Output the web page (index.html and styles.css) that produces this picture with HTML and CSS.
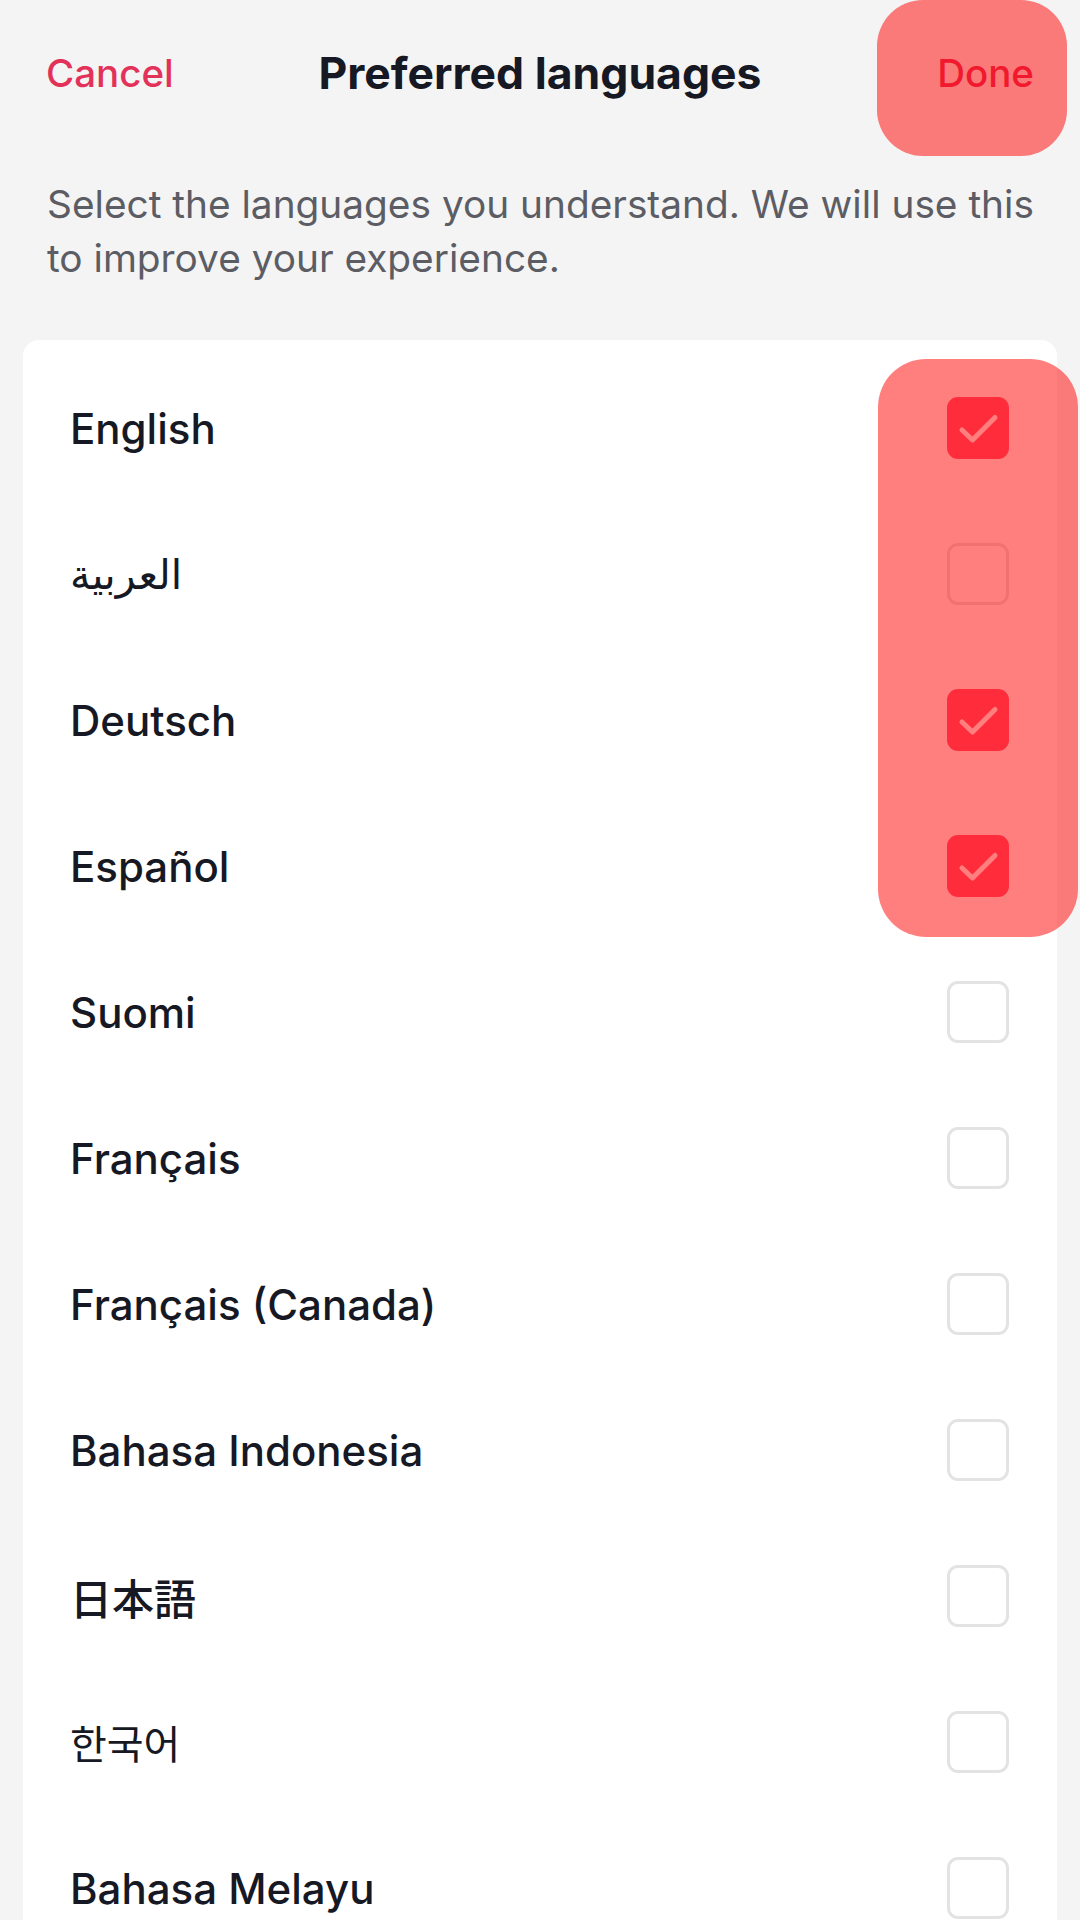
FILE: index.html
```html
<!DOCTYPE html>
<html lang="en">
    <head>
        <meta charset="UTF-8" />
        <meta name="viewport" content="width=device-width, initial-scale=1.0" />
        <title>Preferred languages</title>
        <link rel="stylesheet" href="styles.css">
    </head>
    <body>
        <header class="top-bar">
            <span class="top-bar__cancel">Cancel</span>
            <h1 class="top-bar__title">Preferred languages</h1>
            <span class="top-bar__done">Done</span>
        </header>

        <p class="intro">Select the languages you understand. We will use this to improve your experience.</p>

        <ul class="lang-list">
            <li class="lang-row"><span class="lang-name">English</span><span class="check is-on"></span></li>
            <li class="lang-row"><span class="lang-name lang-name--ar">العربية</span><span class="check"></span></li>
            <li class="lang-row"><span class="lang-name">Deutsch</span><span class="check is-on"></span></li>
            <li class="lang-row"><span class="lang-name">Español</span><span class="check is-on"></span></li>
            <li class="lang-row"><span class="lang-name">Suomi</span><span class="check"></span></li>
            <li class="lang-row"><span class="lang-name">Français</span><span class="check"></span></li>
            <li class="lang-row"><span class="lang-name">Français (Canada)</span><span class="check"></span></li>
            <li class="lang-row"><span class="lang-name">Bahasa Indonesia</span><span class="check"></span></li>
            <li class="lang-row"><span class="lang-name lang-name--cjk" lang="ja">日本語</span><span class="check"></span></li>
            <li class="lang-row"><span class="lang-name lang-name--ko" lang="ko">한국어</span><span class="check"></span></li>
            <li class="lang-row"><span class="lang-name">Bahasa Melayu</span><span class="check"></span></li>
        </ul>

        <!-- highlight marks laid over the screenshot -->
        <div class="mark mark--done"></div>
        <div class="mark mark--checks"></div>
    </body>
</html>
```

FILE: styles.css
```css
:root {
    --ink: #161823;
    --brand: #ff5a78;
    --link: #e3325a;
    --bg: #f4f4f4;
}

body {
    margin: 0;
    background-color: var(--bg);
    font-family: Inter, "Noto Sans", "DejaVu Sans", sans-serif;
    color: var(--ink);
    overflow: hidden;
    height: 1920px;
    position: relative;
}

.top-bar {
    display: grid;
    grid-template-columns: 1fr auto 1fr;
    align-items: center;
    height: 146px;
    padding: 0 46px 0 46px;
}

.top-bar__cancel,
.top-bar__done {
    font-size: 38.5px;
    font-weight: 500;
    color: var(--link);
}

.top-bar__done {
    justify-self: end;
}

.top-bar__title {
    margin: 0;
    font-size: 44.5px;
    font-weight: 700;
}

.intro {
    margin: 31px 44px 55px 47px;
    font-size: 38.8px;
    line-height: 54px;
    color: #5c5d64;
}

.lang-list {
    list-style: none;
    margin: 0 23px;
    padding: 15px 0 0;
    background: #fff;
    border-radius: 16px;
}

.lang-row {
    display: flex;
    align-items: center;
    justify-content: space-between;
    height: 146px;
    padding: 0 48px 0 47px;
}

.lang-name {
    font-size: 42px;
    font-weight: 500;
}

.lang-name--ar {
    font-size: 41px;
}

.lang-name--cjk {
    font-family: "Noto Sans CJK JP", sans-serif;
    font-size: 42px;
}

.lang-name--ko {
    font-family: "Noto Sans CJK KR", sans-serif;
    font-size: 40px;
    font-weight: 400;
}

.check {
    width: 62px;
    height: 62px;
    box-sizing: border-box;
    border: 3px solid #e3e3e4;
    border-radius: 11px;
}

.check.is-on {
    border: none;
    background: var(--brand) url("data:image/svg+xml,%3Csvg xmlns='http://www.w3.org/2000/svg' viewBox='0 0 62 62'%3E%3Cpath d='M15 33 L25.5 43 L48 20.5' fill='none' stroke='%23fff' stroke-width='5' stroke-linecap='round' stroke-linejoin='round'/%3E%3C/svg%3E") center / 62px 62px no-repeat;
}

.mark {
    position: absolute;
    background: rgba(255, 0, 0, 0.5);
}

.mark--done {
    left: 877px;
    top: 0;
    width: 190px;
    height: 156px;
    border-radius: 46px;
}

.mark--checks {
    left: 878px;
    top: 359px;
    width: 200px;
    height: 578px;
    border-radius: 48px;
}
```
